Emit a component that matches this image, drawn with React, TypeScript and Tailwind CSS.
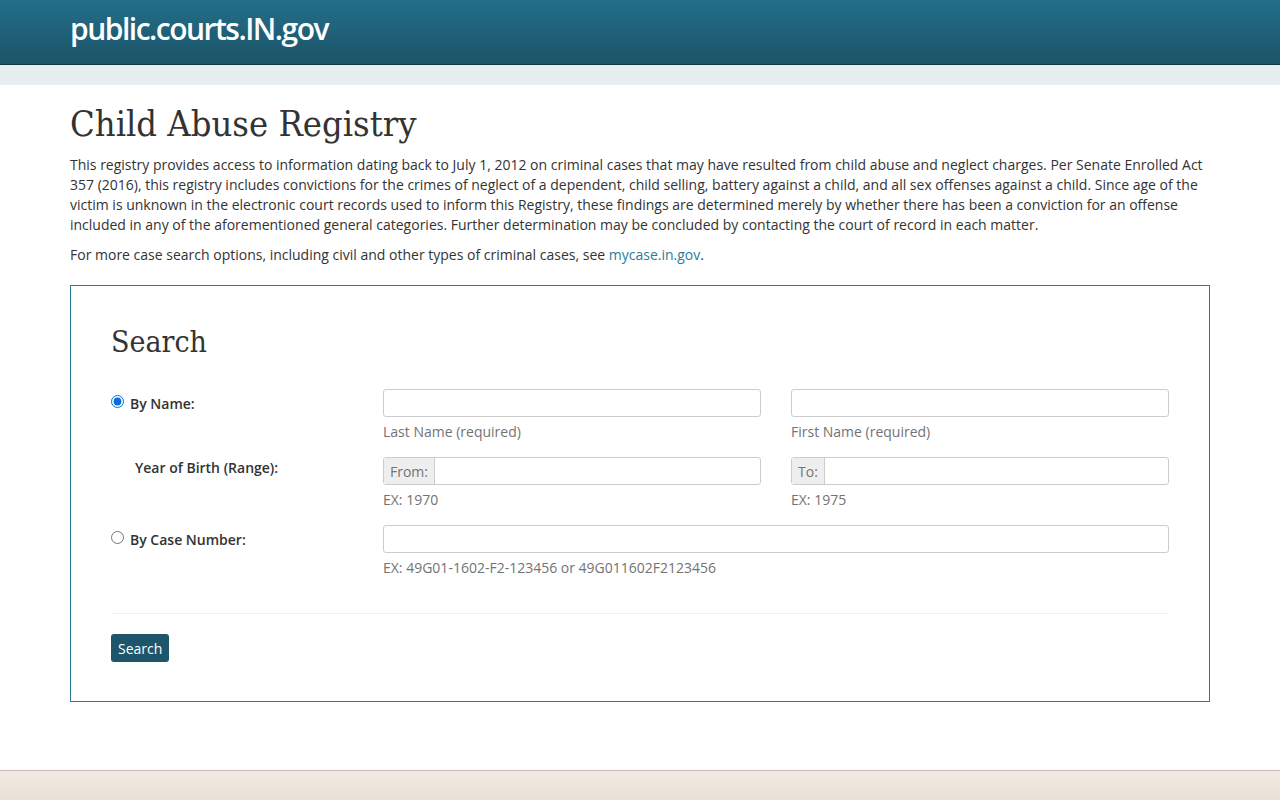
export default function App() {
  const sans = { fontFamily: '"Open Sans", "Liberation Sans", sans-serif' };
  const serif = { fontFamily: '"DejaVu Serif Condensed", "DejaVu Serif", "Liberation Serif", serif' };

  return (
    <div className="min-h-[800px] flex flex-col bg-white text-[14px] text-[#333]" style={sans}>
      <header className="h-[65px] bg-gradient-to-b from-[#236e89] to-[#1c5468] border-b border-[#123a48]">
        <div className="mx-[70px] pt-[9px]">
          <span className="text-white text-[30px] font-semibold tracking-[-1.5px] leading-[40px]">
            public.courts.IN.gov
          </span>
        </div>
      </header>
      <div className="h-[20px] bg-[#e8eef0]" />

      <main className="flex-1 mx-[70px] pb-[68px]">
        <h1 className="text-[36px] leading-[44px] mt-[17px] mb-[9px] text-[#333] font-light" style={serif}>
          Child Abuse Registry
        </h1>
        <p className="leading-[20px] mb-[10px]">
          This registry provides access to information dating back to July 1, 2012 on criminal cases that may have resulted from child abuse and neglect charges. Per Senate Enrolled Act 357 (2016), this registry includes convictions for the crimes of neglect of a dependent, child selling, battery against a child, and all sex offenses against a child. Since age of the victim is unknown in the electronic court records used to inform this Registry, these findings are determined merely by whether there has been a conviction for an offense included in any of the aforementioned general categories. Further determination may be concluded by contacting the court of record in each matter.
        </p>
        <p className="leading-[20px]">
          For more case search options, including civil and other types of criminal cases, see{" "}
          <a className="text-[#2b7d96]">mycase.in.gov</a>.
        </p>

        <section className="mt-[20px] border border-[#2b7d96] px-[40px] pt-[36px] pb-[39px]">
          <h2 className="text-[30px] leading-[40px] mb-[27px] text-[#333]" style={serif}>
            Search
          </h2>

          <div className="flex flex-col gap-[15px]">
            <div className="flex">
              <label className="w-[272px] flex items-start pt-[4px] font-semibold">
                <input type="radio" name="mode" defaultChecked className="w-[13px] h-[13px] mt-[2px] mr-[6px] accent-[#0a6fd8]" />
                By Name:
              </label>
              <div className="flex-1 grid grid-cols-2 gap-[30px]">
                <div>
                  <input className="w-full h-[28px] border border-[#ccc] rounded-[3px]" />
                  <div className="mt-[5px] leading-[20px] text-[#737373]">Last Name (required)</div>
                </div>
                <div>
                  <input className="w-full h-[28px] border border-[#ccc] rounded-[3px]" />
                  <div className="mt-[5px] leading-[20px] text-[#737373]">First Name (required)</div>
                </div>
              </div>
            </div>

            <div className="flex">
              <div className="w-[272px] pl-[24px] font-semibold">Year of Birth (Range):</div>
              <div className="flex-1 grid grid-cols-2 gap-[30px]">
                <div>
                  <div className="flex h-[28px] border border-[#ccc] rounded-[3px]">
                    <span className="px-[6px] flex items-center bg-[#eee] border-r border-[#ccc] text-[#737373]">From:</span>
                    <input className="flex-1 min-w-0" />
                  </div>
                  <div className="mt-[5px] leading-[20px] text-[#737373]">EX: 1970</div>
                </div>
                <div>
                  <div className="flex h-[28px] border border-[#ccc] rounded-[3px]">
                    <span className="px-[6px] flex items-center bg-[#eee] border-r border-[#ccc] text-[#737373]">To:</span>
                    <input className="flex-1 min-w-0" />
                  </div>
                  <div className="mt-[5px] leading-[20px] text-[#737373]">EX: 1975</div>
                </div>
              </div>
            </div>

            <div className="flex">
              <label className="w-[272px] flex items-start pt-[4px] font-semibold">
                <input type="radio" name="mode" className="w-[13px] h-[13px] mt-[2px] mr-[6px]" />
                By Case Number:
              </label>
              <div className="flex-1">
                <input className="w-full h-[28px] border border-[#ccc] rounded-[3px]" />
                <div className="mt-[5px] leading-[20px] text-[#737373]">EX: 49G01-1602-F2-123456 or 49G011602F2123456</div>
              </div>
            </div>
          </div>

          <hr className="mt-[35px] mb-[20px] border-0 border-t border-[#eee]" />

          <button className="h-[28px] px-[7px] bg-[#1d566b] text-white rounded-[3px] text-[14px]">Search</button>
        </section>
      </main>

      <footer className="h-[30px] border-t border-[#c9bcb0] bg-gradient-to-b from-[#f2ebe3] to-[#e9e0d6]" />
    </div>
  );
}
